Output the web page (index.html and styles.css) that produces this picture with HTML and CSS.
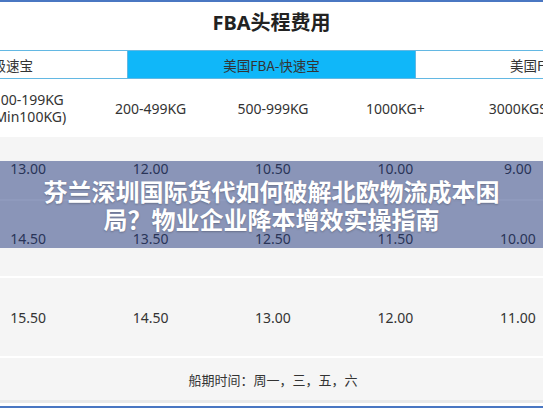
FILE: index.html
```html
<!DOCTYPE html>
<html lang="zh-CN">
<head>
  <meta charset="UTF-8">
  <meta name="viewport" content="width=device-width, initial-scale=1.0">
  <title>FBA头程费用</title>
  <link rel="stylesheet" href="styles.css">
</head>
<body>

  <div class="page">
    <h1 class="title">FBA头程费用</h1>

    <div class="tabs">
      <div class="tab side">美国FBA-超级速宝</div>
      <div class="tab active">美国FBA-快速宝</div>
      <div class="tab side">美国FBA-普通速宝</div>
    </div>

    <div class="sheet">
      <div class="row head">
        <div>100-199KG<br>(Min100KG)</div>
        <div>200-499KG</div>
        <div>500-999KG</div>
        <div>1000KG+</div>
        <div>3000KGS</div>
      </div>
      <div class="row price r1">
        <div>13.00</div>
        <div>12.00</div>
        <div>10.50</div>
        <div>10.00</div>
        <div>9.00</div>
      </div>
      <div class="row price r2">
        <div>14.50</div>
        <div>13.50</div>
        <div>12.50</div>
        <div>11.50</div>
        <div>10.00</div>
      </div>
      <div class="row price r3">
        <div>15.50</div>
        <div>14.50</div>
        <div>13.00</div>
        <div>12.00</div>
        <div>11.00</div>
      </div>
      <div class="foot">船期时间：周一，三，五，六</div>
    </div>

    <!-- article title laid over the table -->
    <div class="overlay">
      <p>芬兰深圳国际货代如何破解北欧物流成本困局？物业企业降本增效实操指南</p>
    </div>
  </div>

</body>
</html>
```

FILE: styles.css
```css
body {
  margin: 0;
  font-family: "Noto Sans", "Noto Sans CJK SC", sans-serif;
  color: #333;
  background-color: #fff;
}

.page {
  position: relative;
  width: 543px;
  height: 408px;
  box-sizing: border-box;
  border-top: 2px solid #4a77c2;
  border-bottom: 2px solid #4a77c2;
  overflow: hidden;
  background-color: #fff;
}

.title {
  margin: 0;
  height: 48px;
  box-sizing: border-box;
  padding-bottom: 10px;
  display: flex;
  justify-content: center;
  align-items: center;
  font-size: 20px;
  font-weight: 700;
  color: #222;
}

.tabs {
  display: flex;
  height: 29px;
  box-sizing: border-box;
  border-top: 1px solid #63b8e3;
  border-bottom: 1px solid #63b8e3;
  margin-left: -171px;
}

.tab {
  flex: none;
  width: 288px;
  box-sizing: border-box;
  border-right: 1px solid #63b8e3;
  display: flex;
  justify-content: center;
  align-items: center;
  font-family: "Noto Sans CJK SC", sans-serif;
  font-size: 13.5px;
  color: #333;
}

.tab.side {
  width: 299px;
}

.tab.active {
  background-color: #10b7f9;
}

.sheet {
  width: 612px;
  margin-left: -33px;
}

.row {
  display: grid;
  grid-template-columns: repeat(5, 1fr);
  align-items: center;
  text-align: center;
  font-size: 14px;
  line-height: 17px;
  white-space: nowrap;
}

.head {
  height: 58px;
  background-color: #fff;
}

.price {
  background-color: #f5f5f5;
  margin-bottom: 2px;
}

.r1 { height: 62px; }
.r2 { height: 75px; }
.r3 { height: 78px; }

.foot {
  height: 42px;
  display: flex;
  justify-content: center;
  align-items: center;
  background-color: #f5f5f5;
  border-bottom: 3px solid #e9e9e9;
  font-family: "Noto Sans CJK SC", sans-serif;
  font-size: 13px;
}

.overlay {
  position: absolute;
  left: 0;
  right: 0;
  top: 159px;
  height: 87px;
  display: flex;
  justify-content: center;
  align-items: center;
  background-color: rgba(31, 53, 123, 0.5);
}

.overlay p {
  margin: 0;
  max-width: 460px;
  text-align: center;
  font-family: "Noto Sans CJK SC", sans-serif;
  font-size: 24px;
  font-weight: 700;
  line-height: 28px;
  color: #fff;
  text-shadow: 0 1px 2px rgba(0, 0, 0, 0.25);
}
```
